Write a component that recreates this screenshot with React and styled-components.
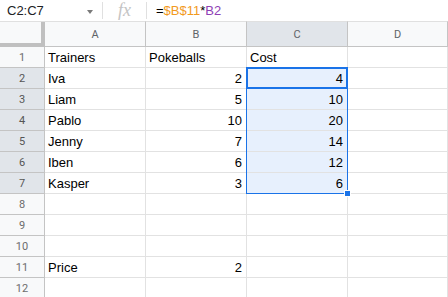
import React from 'react';
import styled, { createGlobalStyle } from 'styled-components';

const GlobalStyle = createGlobalStyle`
  html, body {
    margin: 0;
    padding: 0;
    background: #fff;
    overflow: hidden;
  }
  body {
    font-family: "Liberation Sans", Arial, sans-serif;
  }
`;

const ROW_H = 21;
const HEAD_H = 26;
const ROWHEAD_W = 45;
const COL_W = 101;

const Page = styled.div`
  width: 448px;
  height: 297px;
  overflow: hidden;
`;

const FormulaBar = styled.div`
  display: flex;
  align-items: center;
  height: 21px;
  box-sizing: border-box;
  background: #fff;
`;

const NameBox = styled.div`
  display: flex;
  align-items: center;
  justify-content: space-between;
  width: 102px;
  box-sizing: border-box;
  padding: 0 9px 0 7px;
  font-size: 13px;
  color: #202124;
`;

const Caret = styled.span`
  width: 0;
  height: 0;
  border-left: 3.5px solid transparent;
  border-right: 3.5px solid transparent;
  border-top: 4px solid #7a7a7a;
  margin-top: 2px;
`;

const Divider = styled.div`
  width: 1px;
  height: 17px;
  background: #e0e0e0;
`;

const Fx = styled.div`
  width: 43px;
  text-align: center;
  font-family: "Liberation Serif", "Times New Roman", serif;
  font-style: italic;
  font-size: 18px;
  color: #c4c4c4;
  line-height: 21px;
`;

const Formula = styled.div`
  padding-left: 9px;
  font-size: 13px;
  color: #000;
`;

const Ref = styled.span`
  color: ${p => p.$color};
`;

const GridWrap = styled.div`
  position: relative;
`;

const Grid = styled.div`
  display: grid;
  grid-template-columns: ${ROWHEAD_W}px ${COL_W}px ${COL_W}px ${COL_W}px 1fr;
  grid-template-rows: ${HEAD_H}px;
  grid-auto-rows: ${ROW_H}px;
`;

const Corner = styled.div`
  background: #f8f9fa;
  box-sizing: border-box;
  border-top: 1px solid #e0e0e0;
  box-shadow: inset -4px -4px 0 #c0c0c0;
`;

const ColHead = styled.div`
  display: flex;
  align-items: center;
  justify-content: center;
  box-sizing: border-box;
  background: ${p => (p.$active ? '#e1e5ea' : '#f8f9fa')};
  border-top: 1px solid #e0e0e0;
  border-right: 1px solid #c4c4c4;
  border-bottom: 1px solid #c4c4c4;
  font-family: Roboto, "Liberation Sans", sans-serif;
  font-size: 11px;
  color: #5f6368;
  padding-top: 1px;
`;

const RowHead = styled.div`
  display: flex;
  align-items: center;
  justify-content: center;
  box-sizing: border-box;
  background: ${p => (p.$active ? '#e1e5ea' : '#f8f9fa')};
  border-right: 1px solid #c4c4c4;
  border-bottom: 1px solid #c4c4c4;
  font-family: Roboto, "Liberation Sans", sans-serif;
  font-size: 11px;
  color: ${p => (p.$active ? '#555' : '#6d6d6d')};
`;

const Cell = styled.div`
  display: flex;
  align-items: flex-end;
  justify-content: ${p => (p.$num ? 'flex-end' : 'flex-start')};
  box-sizing: border-box;
  padding: 0 4px 2px 3px;
  background: ${p => (p.$sel ? '#e7f0fd' : '#fff')};
  border-right: 1px solid #e2e2e2;
  border-bottom: 1px solid #e2e2e2;
  font-size: 13px;
  color: #000;
  white-space: nowrap;
  overflow: hidden;
`;

const Selection = styled.div`
  position: absolute;
  box-sizing: border-box;
  border: 1px solid #1a73e8;
  pointer-events: none;
`;

const ActiveCell = styled.div`
  position: absolute;
  box-sizing: border-box;
  border: 2px solid #1a73e8;
  pointer-events: none;
`;

const Handle = styled.div`
  position: absolute;
  width: 7px;
  height: 7px;
  box-sizing: border-box;
  background: #1a73e8;
  border: 1px solid #fff;
`;

const rows = [
  ['Trainers', 'Pokeballs', 'Cost'],
  ['Iva', 2, 4],
  ['Liam', 5, 10],
  ['Pablo', 10, 20],
  ['Jenny', 7, 14],
  ['Iben', 6, 12],
  ['Kasper', 3, 6],
  ['', '', ''],
  ['', '', ''],
  ['', '', ''],
  ['Price', 2, ''],
  ['', '', ''],
];

const cols = ['A', 'B', 'C', 'D'];
const isNum = v => typeof v === 'number';

export default function App() {
  const selLeft = ROWHEAD_W + COL_W * 2 - 1;
  const selTop = HEAD_H + ROW_H - 1;
  const selH = ROW_H * 6 + 1;

  return (
    <Page>
      <GlobalStyle />
      <FormulaBar>
        <NameBox>
          <span>C2:C7</span>
          <Caret />
        </NameBox>
        <Divider />
        <Fx>fx</Fx>
        <Divider />
        <Formula>
          =<Ref $color="#f29a1d">$B$11</Ref>*<Ref $color="#8f3fb5">B2</Ref>
        </Formula>
      </FormulaBar>
      <GridWrap>
        <Grid>
          <Corner />
          {cols.map(c => (
            <ColHead key={c} $active={c === 'C'}>{c}</ColHead>
          ))}
          {rows.map((r, i) => {
            const sel = i >= 1 && i <= 6;
            return (
              <React.Fragment key={i}>
                <RowHead $active={sel}>{i + 1}</RowHead>
                <Cell $num={isNum(r[0])}>{r[0]}</Cell>
                <Cell $num={isNum(r[1])}>{r[1]}</Cell>
                <Cell $num={isNum(r[2])} $sel={sel}>{r[2]}</Cell>
                <Cell />
              </React.Fragment>
            );
          })}
        </Grid>
        <Selection style={{ left: selLeft, top: selTop, width: COL_W + 1, height: selH }} />
        <ActiveCell style={{ left: selLeft, top: selTop, width: COL_W + 1, height: ROW_H + 1 }} />
        <Handle style={{ left: selLeft + COL_W - 3, top: selTop + selH - 4 }} />
      </GridWrap>
    </Page>
  );
}
